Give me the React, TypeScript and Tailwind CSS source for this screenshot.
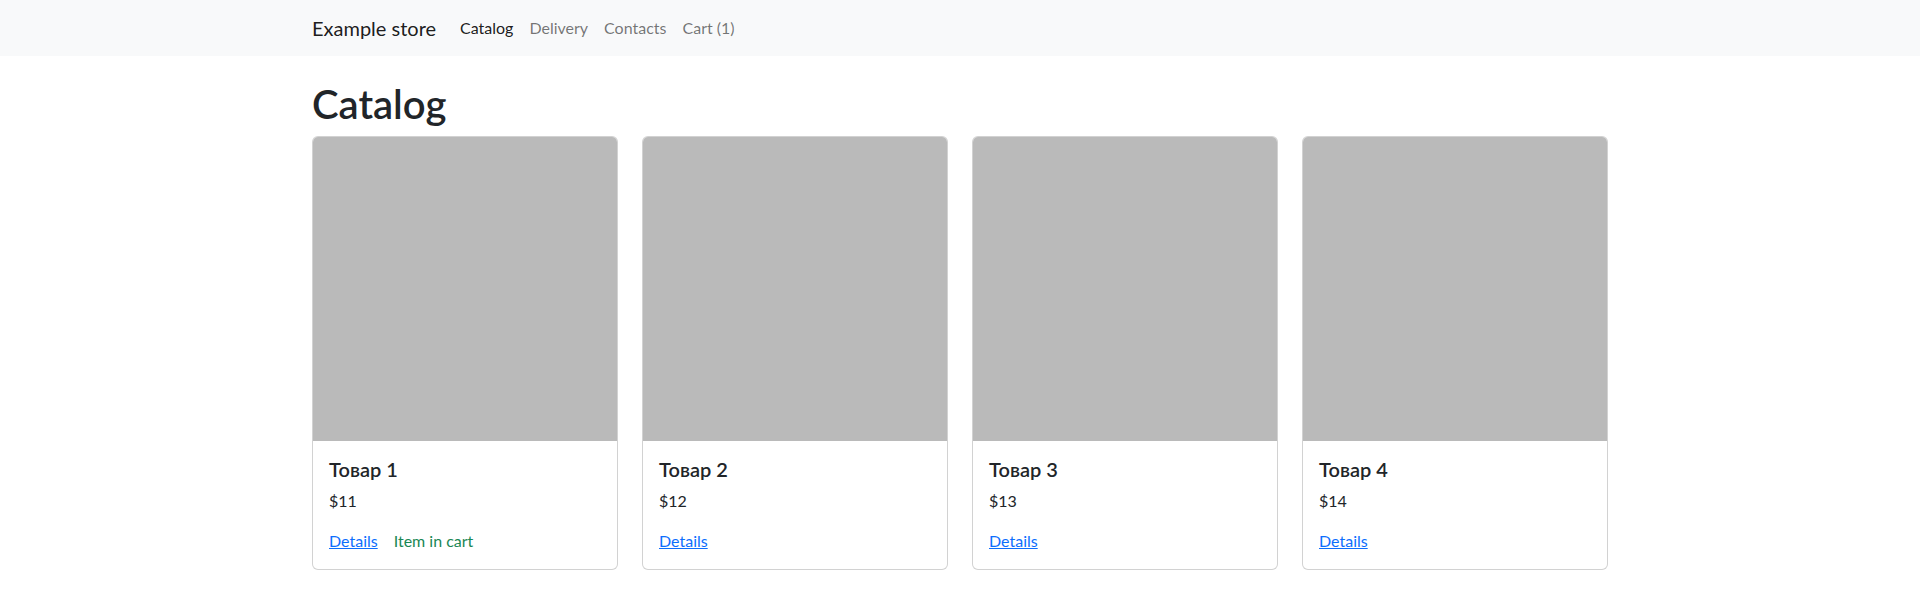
import React from "react";

const products = [
  { name: "Товар 1", price: "$11", inCart: true },
  { name: "Товар 2", price: "$12", inCart: false },
  { name: "Товар 3", price: "$13", inCart: false },
  { name: "Товар 4", price: "$14", inCart: false },
];

export default function App() {
  return (
    <div
      className="min-h-[594px] bg-white text-[#212529] text-[16px] leading-[1.5]"
      style={{ fontFamily: 'Lato, "Noto Sans", "Liberation Sans", sans-serif' }}
    >
      <nav className="bg-[#f8f9fa] py-2">
        <div className="w-[1320px] mx-auto px-3 flex items-center">
          <a className="text-[20px] leading-[30px] py-[5px] mr-4 text-[rgba(0,0,0,0.9)]">Example store</a>
          <div className="flex">
            <a className="px-2 py-2 leading-6 text-[rgba(0,0,0,0.9)]">Catalog</a>
            <a className="px-2 py-2 leading-6 text-[rgba(0,0,0,0.55)]">Delivery</a>
            <a className="px-2 py-2 leading-6 text-[rgba(0,0,0,0.55)]">Contacts</a>
            <a className="px-2 py-2 leading-6 text-[rgba(0,0,0,0.55)]">Cart (1)</a>
          </div>
        </div>
      </nav>
      <main className="w-[1320px] mx-auto px-3 mt-6">
        <h1 className="text-[40px] leading-[1.2] font-semibold mb-2">Catalog</h1>
        <div className="grid grid-cols-4 gap-6">
          {products.map((p) => (
            <div key={p.name} className="border border-[rgba(0,0,0,0.175)] rounded-[6px] bg-white flex flex-col">
              <div className="h-[304px] bg-[#bababa] rounded-t-[5px]" />
              <div className="p-4">
                <h5 className="text-[20px] leading-[1.2] font-semibold mb-2">{p.name}</h5>
                <p className="mb-4">{p.price}</p>
                <div className="flex">
                  <a className="text-[#0d6efd] underline">Details</a>
                  {p.inCart && <span className="ml-4 text-[#198754]">Item in cart</span>}
                </div>
              </div>
            </div>
          ))}
        </div>
      </main>
    </div>
  );
}
